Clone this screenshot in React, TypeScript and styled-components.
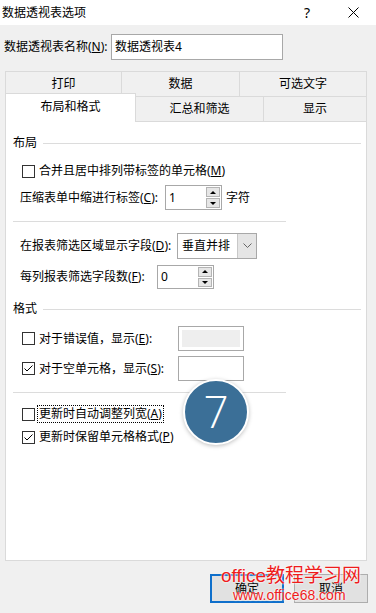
import React from 'react'
import styled, { createGlobalStyle, css } from 'styled-components'

const GlobalStyle = createGlobalStyle`
  html, body {
    margin: 0;
    padding: 0;
    background: #f0f0f0;
  }
  body {
    font-family: "Noto Sans", "Noto Sans CJK SC", sans-serif;
    font-size: 12px;
    line-height: 16px;
    color: #000;
  }
`

const Dialog = styled.div`
  position: relative;
  width: 376px;
  height: 613px;
  background: #f0f0f0;
  display: flex;
  flex-direction: column;
  overflow: hidden;
`

const TitleBar = styled.div`
  height: 25px;
  background: #fff;
  display: flex;
  align-items: center;
  padding-left: 2px;
`

const TitleText = styled.div`
  flex: 1;
`

const TitleButton = styled.div`
  width: 46px;
  height: 25px;
  display: flex;
  align-items: center;
  justify-content: center;
  font-size: 14px;
`

const Body = styled.div`
  flex: 1;
  display: flex;
  flex-direction: column;
  padding: 0 9px 0 5px;
`

const NameRow = styled.div`
  margin-top: 9px;
  height: 26px;
  display: flex;
  align-items: center;
`

const NameLabel = styled.div`
  width: 107px;
  margin-left: -1px;
`

const TextBox = styled.div<{ w: number; h: number; disabled?: boolean }>`
  box-sizing: border-box;
  width: ${p => p.w}px;
  height: ${p => p.h}px;
  border: 1px solid #a8a8a8;
  background: #fff;
  padding: 0 3px;
  display: flex;
  align-items: center;
  ${p =>
    p.disabled &&
    css`
      background: #eeeeee;
      box-shadow: inset 0 0 0 3px #fff;
    `}
`

const Tabs = styled.div`
  margin-top: 11px;
  display: flex;
  flex-direction: column;
`

const TabRow = styled.div`
  display: flex;
`

const Tab = styled.div<{ w: number; selected?: boolean }>`
  box-sizing: border-box;
  width: ${p => p.w}px;
  height: 25px;
  border-top: 1px solid #dadada;
  border-left: 1px solid #dadada;
  display: flex;
  align-items: center;
  justify-content: center;
  &:last-child {
    border-right: 1px solid #dadada;
  }
  ${p =>
    p.selected &&
    css`
      position: relative;
      z-index: 1;
      background: #fff;
      height: 29px;
      margin-top: -3px;
      margin-bottom: -1px;
      border-right: 1px solid #dadada;
      margin-right: -1px;
      width: ${p.w + 1}px;
      padding-bottom: 2px;
    `}
`

const Panel = styled.div`
  box-sizing: border-box;
  width: 362px;
  height: 440px;
  background: #fff;
  border: 1px solid #dadada;
  padding: 13px 5px 0 7px;
  display: flex;
  flex-direction: column;
`

const SectionHeader = styled.div<{ mt?: number }>`
  margin-top: ${p => p.mt || 0}px;
  height: 16px;
  display: flex;
  align-items: center;
  gap: 6px;
  &::after {
    content: '';
    flex: 1;
    height: 1px;
    background: #dcdcdc;
  }
`

const Separator = styled.div<{ mt: number }>`
  margin-top: ${p => p.mt}px;
  width: 273px;
  height: 1px;
  background: #dcdcdc;
`

const Row = styled.div<{ mt: number; h: number; indent?: number }>`
  margin-top: ${p => p.mt}px;
  height: ${p => p.h}px;
  padding-left: ${p => p.indent ?? 7}px;
  display: flex;
  align-items: center;
`

const FieldLabel = styled.div<{ w: number }>`
  width: ${p => p.w}px;
  flex-shrink: 0;
  white-space: nowrap;
`

const CheckText = styled.div<{ w?: number; focused?: boolean }>`
  margin-left: 2px;
  padding: 0 1px;
  border: 1px solid transparent;
  white-space: nowrap;
  ${p => p.w && `width: ${p.w - 4}px;`}
  ${p =>
    p.focused &&
    css`
      border: 1px dotted #000;
    `}
`

const U = styled.span`
  text-decoration: underline;
`

const Box = styled.div`
  box-sizing: border-box;
  width: 13px;
  height: 13px;
  border: 1px solid #333;
  background: #fff;
  flex-shrink: 0;
  display: flex;
  align-items: center;
  justify-content: center;
`

const Spinner = styled.div<{ w: number; h: number }>`
  box-sizing: border-box;
  width: ${p => p.w}px;
  height: ${p => p.h}px;
  border: 1px solid #a8a8a8;
  background: #fff;
  display: flex;
  align-items: stretch;
  padding: 1px;
`

const SpinValue = styled.div`
  flex: 1;
  padding-left: 2px;
  display: flex;
  align-items: center;
`

const SpinButtons = styled.div`
  width: 14px;
  display: flex;
  flex-direction: column;
  gap: 1px;
`

const SpinButton = styled.div`
  flex: 1;
  box-sizing: border-box;
  background: #e6e6e6;
  border: 1px solid #b4b4b4;
  display: flex;
  align-items: center;
  justify-content: center;
`

const Arrow = styled.div<{ up?: boolean }>`
  width: 0;
  height: 0;
  border-left: 3px solid transparent;
  border-right: 3px solid transparent;
  ${p =>
    p.up
      ? css`
          border-bottom: 3px solid #000;
        `
      : css`
          border-top: 3px solid #000;
        `}
`

const Unit = styled.div`
  margin-left: 4px;
`

const Select = styled.div`
  box-sizing: border-box;
  width: 80px;
  height: 26px;
  border: 1px solid #a8a8a8;
  background: #fff;
  display: flex;
`

const SelectValue = styled.div`
  flex: 1;
  padding-left: 4px;
  display: flex;
  align-items: center;
`

const SelectButton = styled.div`
  width: 18px;
  background: #e5e5e5;
  border-left: 1px solid #c8c8c8;
  display: flex;
  align-items: center;
  justify-content: center;
`

const ButtonRow = styled.div`
  margin-top: 13px;
  margin-right: -1px;
  display: flex;
  justify-content: flex-end;
  gap: 10px;
`

const Button = styled.div<{ primary?: boolean }>`
  box-sizing: border-box;
  width: 74px;
  height: 29px;
  background: #e1e1e1;
  border: 1px solid #adadad;
  display: flex;
  align-items: center;
  justify-content: center;
  ${p =>
    p.primary &&
    css`
      border: 2px solid #0f6fcb;
    `}
`

const Badge = styled.div`
  position: absolute;
  left: 183px;
  top: 379px;
  box-sizing: border-box;
  width: 66px;
  height: 66px;
  border-radius: 50%;
  background: #3b6f97;
  border: 2px solid #fff;
  box-shadow: 0 1px 4px rgba(0, 0, 0, 0.25);
  color: #fff;
  font-family: "Open Sans", "Noto Sans", sans-serif;
  font-weight: 300;
  font-size: 44px;
  line-height: 60px;
  text-align: center;
`

const Watermark = styled.div`
  position: absolute;
  left: 221px;
  top: 565px;
  color: #ee1c1c;
  font-family: "Liberation Sans", "Noto Sans CJK SC", sans-serif;
  text-shadow: 0 0 2px #fff, 0 0 2px #fff;
  pointer-events: none;
`

const WatermarkTitle = styled.div`
  font-size: 19px;
  line-height: 22px;
  white-space: nowrap;
`

const WatermarkUrl = styled.div`
  margin-left: 12px;
  font-size: 14px;
  line-height: 16px;
  white-space: nowrap;
`

const Check: React.FC<{ checked?: boolean }> = ({ checked }) => (
  <Box>
    {checked && (
      <svg width="11" height="11" viewBox="0 0 11 11">
        <polyline points="1.5,5.5 4,8 9.5,2.5" fill="none" stroke="#000" strokeWidth="1" />
      </svg>
    )}
  </Box>
)

const SpinBox: React.FC<{ value: string; w: number; h: number }> = ({ value, w, h }) => (
  <Spinner w={w} h={h}>
    <SpinValue>{value}</SpinValue>
    <SpinButtons>
      <SpinButton>
        <Arrow up />
      </SpinButton>
      <SpinButton>
        <Arrow />
      </SpinButton>
    </SpinButtons>
  </Spinner>
)

const App: React.FC = () => (
  <Dialog>
    <GlobalStyle />
    <TitleBar>
      <TitleText>数据透视表选项</TitleText>
      <TitleButton>?</TitleButton>
      <TitleButton>
        <svg width="11" height="11" viewBox="0 0 11 11">
          <path d="M0.5 0.5 L10.5 10.5 M10.5 0.5 L0.5 10.5" stroke="#000" strokeWidth="1" />
        </svg>
      </TitleButton>
    </TitleBar>
    <Body>
      <NameRow>
        <NameLabel>
          数据透视表名称(<U>N</U>):
        </NameLabel>
        <TextBox w={172} h={26}>数据透视表4</TextBox>
      </NameRow>

      <Tabs>
        <TabRow>
          <Tab w={116}>打印</Tab>
          <Tab w={118}>数据</Tab>
          <Tab w={128}>可选文字</Tab>
        </TabRow>
        <TabRow>
          <Tab w={130} selected>
            布局和格式
          </Tab>
          <Tab w={128}>汇总和筛选</Tab>
          <Tab w={104}>显示</Tab>
        </TabRow>
      </Tabs>

      <Panel>
        <SectionHeader>布局</SectionHeader>
        <Row mt={10} h={20} indent={9}>
          <Check />
          <CheckText>
            合并且居中排列带标签的单元格(<U>M</U>)
          </CheckText>
        </Row>
        <Row mt={4} h={25}>
          <FieldLabel w={145}>
            压缩表单中缩进行标签(<U>C</U>):
          </FieldLabel>
          <SpinBox value="1" w={57} h={25} />
          <Unit>字符</Unit>
        </Row>
        <Separator mt={11} />
        <Row mt={11} h={26}>
          <FieldLabel w={157}>
            在报表筛选区域显示字段(<U>D</U>):
          </FieldLabel>
          <Select>
            <SelectValue>垂直并排</SelectValue>
            <SelectButton>
              <svg width="9" height="6" viewBox="0 0 9 6">
                <polyline points="0.5,0.5 4.5,4.5 8.5,0.5" fill="none" stroke="#666" strokeWidth="1" />
              </svg>
            </SelectButton>
          </Select>
        </Row>
        <Row mt={6} h={24}>
          <FieldLabel w={137}>
            每列报表筛选字段数(<U>F</U>):
          </FieldLabel>
          <SpinBox value="0" w={57} h={24} />
        </Row>

        <SectionHeader mt={12}>格式</SectionHeader>
        <Row mt={9} h={25} indent={9}>
          <Check />
          <CheckText w={141}>
            对于错误值，显示(<U>E</U>):
          </CheckText>
          <TextBox w={66} h={25} disabled />
        </Row>
        <Row mt={5} h={25} indent={9}>
          <Check checked />
          <CheckText w={141}>
            对于空单元格，显示(<U>S</U>):
          </CheckText>
          <TextBox w={66} h={25} />
        </Row>
        <Separator mt={11} />
        <Row mt={11} h={20} indent={9}>
          <Check />
          <CheckText focused>
            更新时自动调整列宽(<U>A</U>)
          </CheckText>
        </Row>
        <Row mt={3} h={20} indent={9}>
          <Check checked />
          <CheckText>
            更新时保留单元格格式(<U>P</U>)
          </CheckText>
        </Row>
      </Panel>

      <ButtonRow>
        <Button primary>确定</Button>
        <Button>取消</Button>
      </ButtonRow>
    </Body>

    <Badge>7</Badge>

    <Watermark>
      <WatermarkTitle>office教程学习网</WatermarkTitle>
      <WatermarkUrl>www.office68.com</WatermarkUrl>
    </Watermark>
  </Dialog>
)

export default App
